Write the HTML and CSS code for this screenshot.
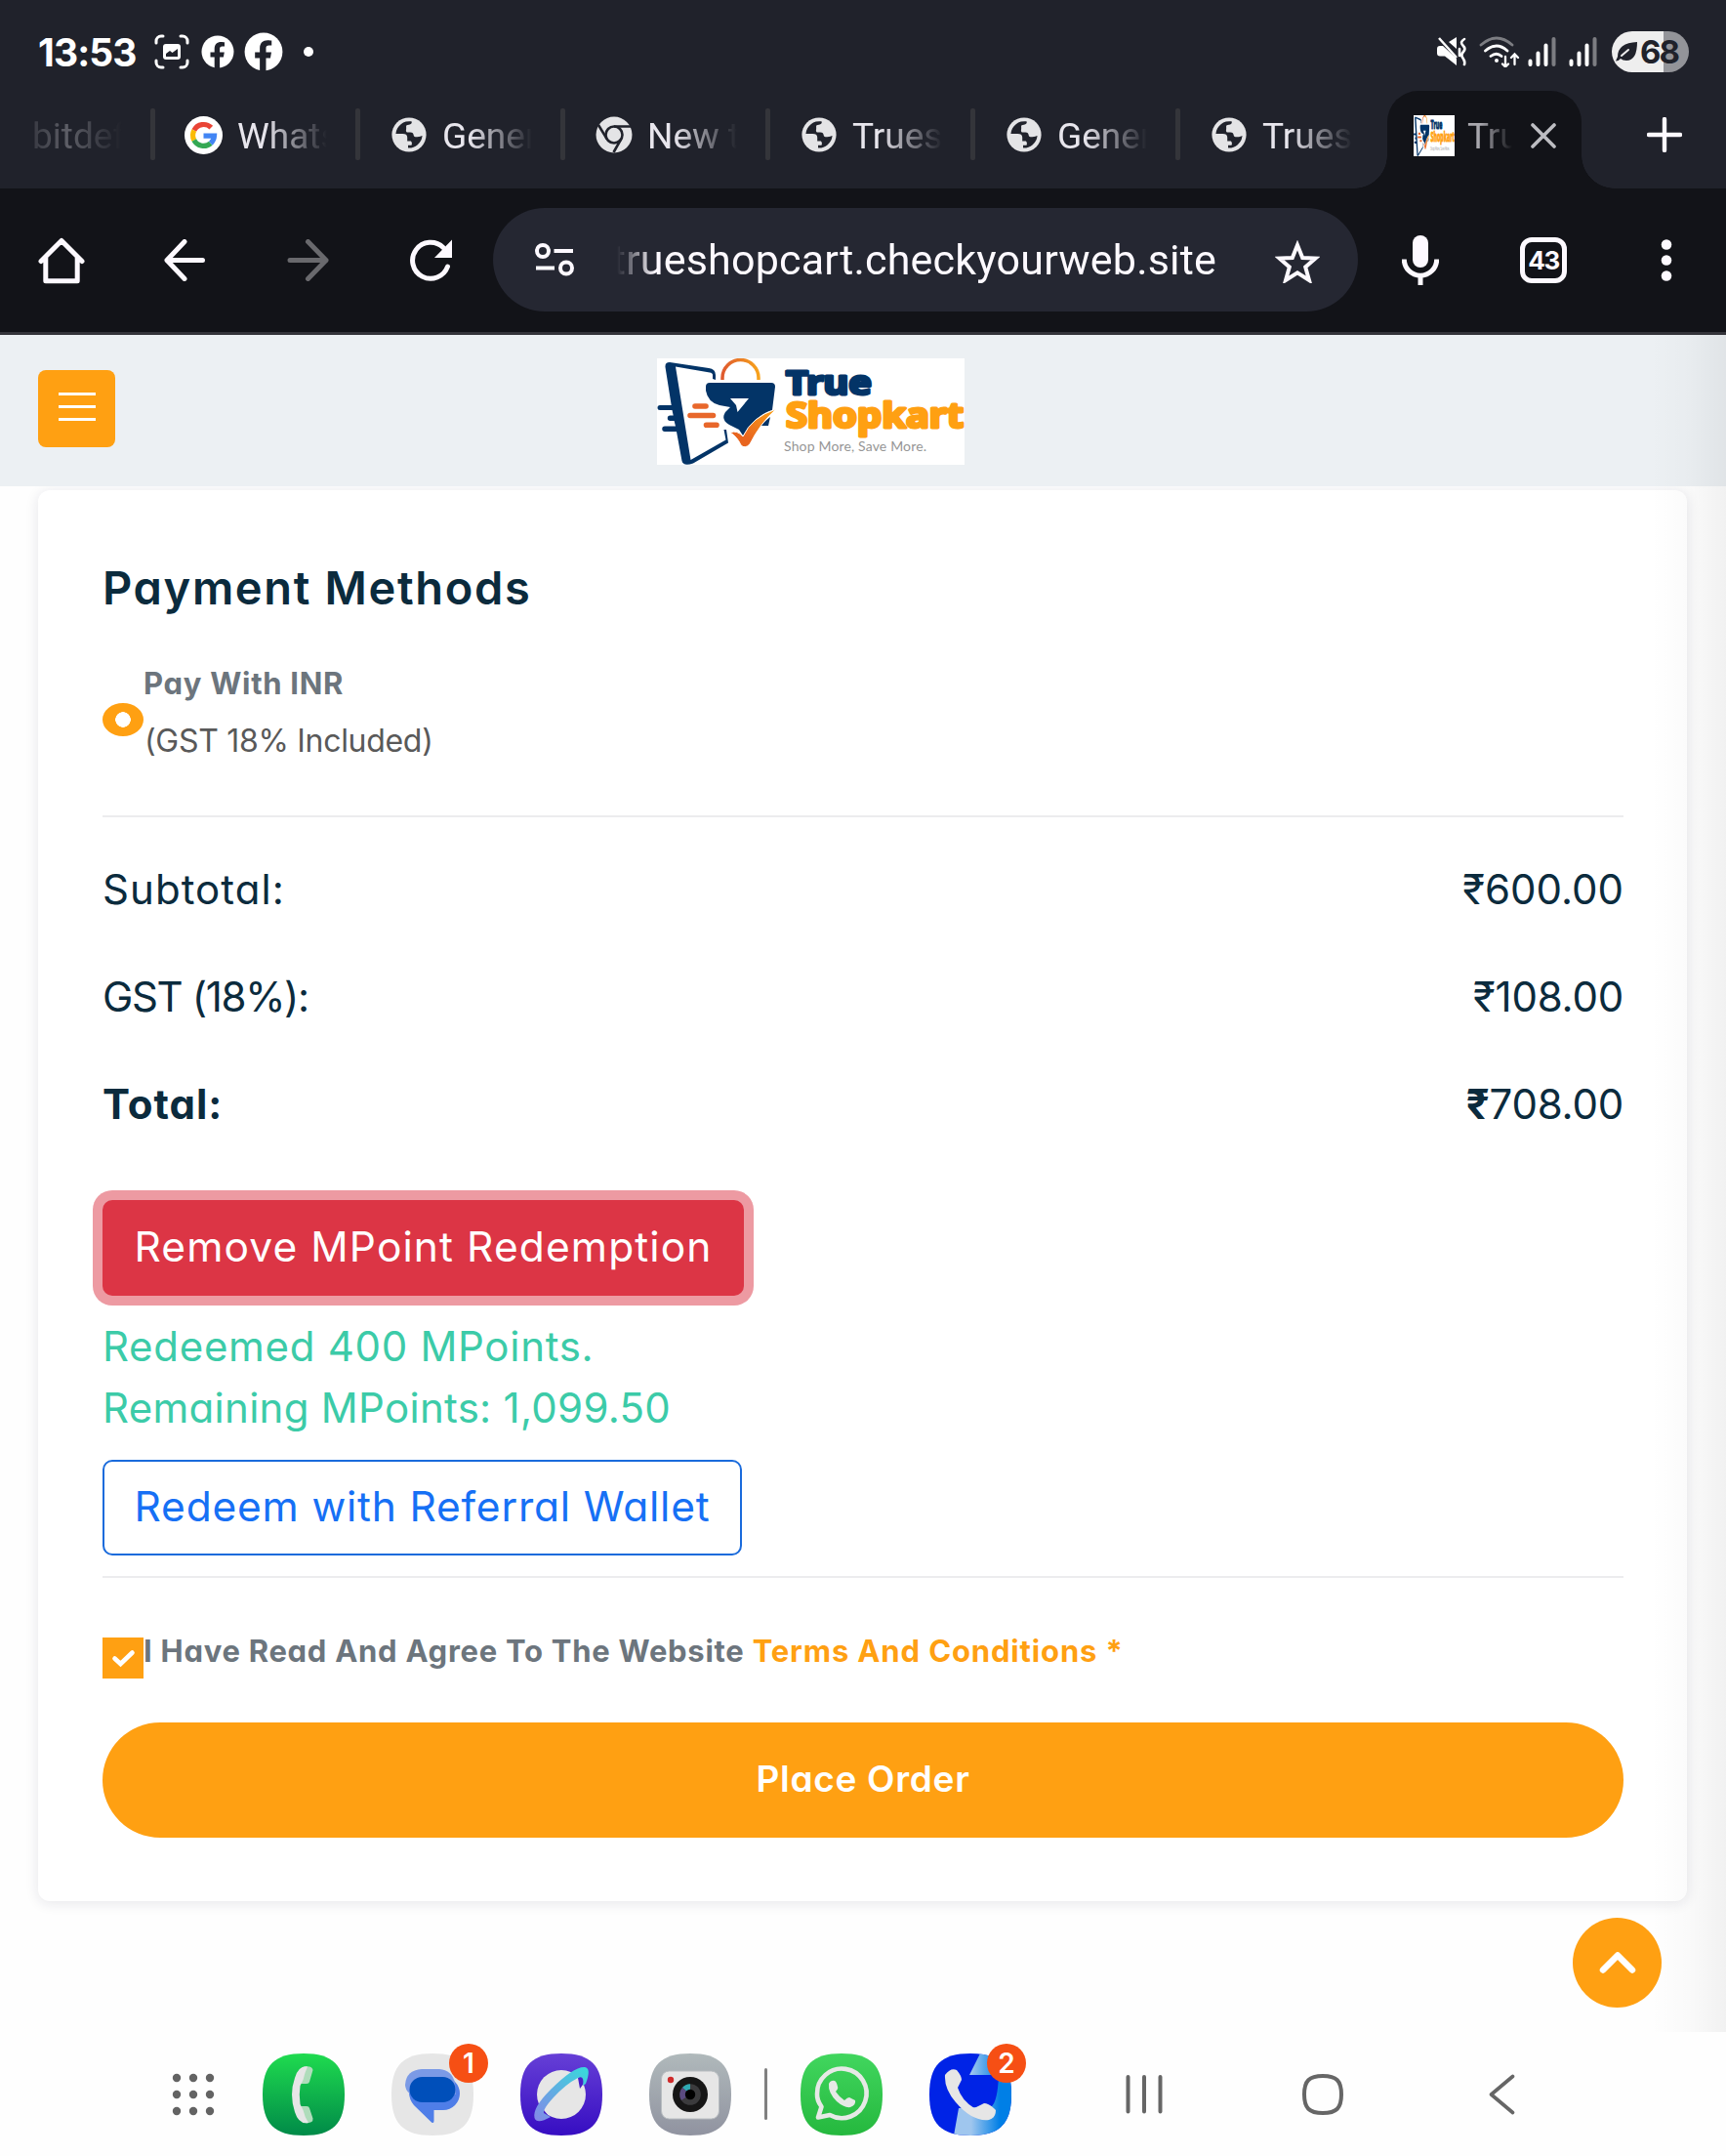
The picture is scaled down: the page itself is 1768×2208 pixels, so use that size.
FILE: index.html
```
<!DOCTYPE html>
<html lang="en">
<head>
<meta charset="utf-8">
<title>True Shopkart - Checkout</title>
<link rel="stylesheet" href="styles.css">
</head>
<body>
<svg class="defs" width="0" height="0" aria-hidden="true">
  <defs>
    <linearGradient id="gHandle" x1="0" x2="1" y1="0" y2="0"><stop offset="0" stop-color="#df5a2e"/><stop offset="1" stop-color="#f7a21c"/></linearGradient>
    <linearGradient id="gTick" x1="0" x2="1" y1="1" y2="0"><stop offset="0.3" stop-color="#e8651f"/><stop offset="1" stop-color="#fba31a"/></linearGradient>
    <linearGradient id="gPhone" x1="0" x2="0" y1="0" y2="1"><stop offset="0" stop-color="#1fdb4f"/><stop offset="1" stop-color="#008a48"/></linearGradient>
    <linearGradient id="gNet" x1="0" x2="0" y1="0" y2="1"><stop offset="0" stop-color="#663fd6"/><stop offset="1" stop-color="#360dc2"/></linearGradient>
    <linearGradient id="gRing" x1="0" x2="1" y1="1" y2="0"><stop offset="0" stop-color="#8587e8"/><stop offset="1" stop-color="#36dbdb"/></linearGradient>
    <linearGradient id="gCam" x1="0" x2="0" y1="0" y2="1"><stop offset="0" stop-color="#b0b9bb"/><stop offset="1" stop-color="#9093a0"/></linearGradient>
    <linearGradient id="gWa" x1="0" x2="0" y1="0" y2="1"><stop offset="0" stop-color="#41d65e"/><stop offset="1" stop-color="#25b83e"/></linearGradient>
    <linearGradient id="gCall" x1="0" x2="1" y1="0" y2="0"><stop offset="0.3" stop-color="#9fc6ee"/><stop offset="0.8" stop-color="#007fe6"/></linearGradient>
    <path id="squircle" d="M42 0C72 0 84 12 84 42S72 84 42 84 0 72 0 42 12 0 42 0Z"/>
    <clipPath id="clipSq"><use href="#squircle"/></clipPath>
    <symbol id="globe" viewBox="0 0 36 36">
      <circle cx="18" cy="18" r="17.6" fill="#e4e4e6"/>
      <path fill="#20222b" d="M4.400 17A14 14 0 0 1 20.500 4.300c.9 1.700-.3 3.300-2.700 3.400-2 .1-3 .6-2.700 2.600.2 1.500-.2 2.700-.2 3.500 0 1.300.8 1.800 2 1.800h2.400c2.300 0 3.200 1.100 3.400 2.900.4 1.700 1.800 1.900 3.600 1.800 2.600-.1 4.200-1 5.300-1.300A14 14 0 0 1 17 31.500V28.700h3.500c.8-1.700.4-3.300-.7-4.200h-3.600v-3.700c0-2.900-1.900-3.800-4.600-3.800z"/>
    </symbol>
    <symbol id="brand" viewBox="0 0 315 109">
      <rect width="315" height="109" fill="#fff"/>
      <path fill="#033467" fill-rule="evenodd" d="M13 4 53 10Q60 11 60 17V22L57 21V17Q57 15 54 14.500L19 8.500 34.500 104 70.500 83.500 68.500 73h2.500L73 86.500 37 107.500Q27 111 25.500 105L20 75H8a2.500 2.500 0 0 1 0-5.500H19L17.600 64H13.500a2.500 2.500 0 0 1 0-5.500h3.200L15.500 53H3a2.500 2.500 0 0 1 0-5H14.700L8.500 9Q8 4 13 4Z"/>
      <path fill="none" stroke="url(#gHandle)" stroke-width="3.500" d="M67 22V20a18.500 18.500 0 0 1 37 0v2"/>
      <path fill="#033467" d="M54 25h63q4 0 4 4L118 53Q103 57 92 75L88 79 84 73 74 68Q65 63 70 55L75 50 64 48Q52 45 50 33V29Q50 25 54 25ZM116 60 114 69H105Z"/>
      <path fill="#fff" d="M75 41H94L82.500 55 81 48Z"/>
      <g stroke="#e8672b" stroke-width="5.600" stroke-linecap="round"><path d="M39 49H50M34 58.500H57.500M50.500 68.200H61"/></g>
      <path fill="url(#gTick)" stroke="#fff" stroke-width="1" d="M75 76Q82 73 88 80 97 60 122 52 106 66 95 88 90 93 86 89 82 80 75 76Z"/>
      <g class="brand-name" stroke-linejoin="round">
        <text x="132" y="37" font-size="34" textLength="88" lengthAdjust="spacingAndGlyphs" fill="#033467" stroke="#033467">True</text>
        <text x="132" y="70.500" font-size="35" textLength="182" lengthAdjust="spacingAndGlyphs" fill="#ffa012" stroke="#ffa012">Shopkart</text>
      </g>
      <text class="brand-tag" x="130" y="94.500" font-size="14" textLength="146" fill="#969696">Shop More, Save More.</text>
    </symbol>
  </defs>
</svg>

<div class="status">
  <span class="clock">13:53</span>
  <svg class="st-shot" width="36" height="36" viewBox="0 0 36 36" fill="none" stroke="#fff" stroke-width="3" stroke-linecap="round"><path d="M2 9V7a5 5 0 0 1 5-5h2M27 2h2a5 5 0 0 1 5 5v2M34 27v2a5 5 0 0 1-5 5h-2M9 34H7a5 5 0 0 1-5-5v-2"/><rect x="9" y="10" width="18" height="16" rx="3" fill="#fff" stroke="none"/><path d="M12 23V20l4-3 2.500 2 5.500-4v8z" fill="#20222b" stroke="none"/></svg>
  <svg class="st-fb" width="34" height="34" viewBox="0 0 34 34"><circle cx="17" cy="17" r="16.500" fill="#fff"/><path fill="#20222b" d="M13.700 34V22.500H9.500V17.500h4.200V14c0-4.600 2.600-7 6.800-7 1.500 0 3.500.3 3.500.3v4.200h-2.300c-2 0-2.600 1-2.600 2.300v3.700h4.700l-.9 5h-3.800V34z"/></svg>
  <svg class="st-fb2" width="40" height="40" viewBox="0 0 34 34"><circle cx="17" cy="17" r="16.500" fill="#fff"/><path fill="#20222b" d="M13.700 34V22.500H9.500V17.500h4.200V14c0-4.600 2.600-7 6.800-7 1.500 0 3.500.3 3.500.3v4.200h-2.300c-2 0-2.600 1-2.600 2.300v3.700h4.700l-.9 5h-3.800V34z"/></svg>
  <i class="st-dot"></i>
  <div class="status-right">
    <svg width="30" height="30" viewBox="0 0 30 30"><path fill="#fff" d="M0 12q0-3 3-3h3L20 22V29L8 19.500H3q-3 0-3-3zM12 5l8-5V12z"/><path d="M2 1 20 21" stroke="#fff" stroke-width="2.500"/><path d="M28 2q-5 3-1.500 6.500T27 15t-.5 6.500T28 28M23 12v7" fill="none" stroke="#fff" stroke-width="2.600" stroke-linecap="round"/></svg>
    <svg class="st-wifi" width="42" height="32" viewBox="0 0 42 32" fill="none" stroke="#fff" stroke-width="2.800" stroke-linecap="round"><path d="M2 9Q18-5 34 9" stroke="#7c7d82"/><path d="M6.500 15Q18 5 29 15M12 20.500Q18 16 23 20.500"/><circle cx="18" cy="25" r="1" stroke-width="2"/><path d="M27 21V32M24 28.500l3 3 3-3M36.500 29V18.500M33 22l3.500-3.500L40 22" stroke-width="2.300"/></svg>
    <svg class="st-sig" width="30" height="30" viewBox="0 0 30 30" stroke="#fff" stroke-width="4" stroke-linecap="round"><path d="M2.500 24.500V28M10.500 16.500V28M18.500 8.500V28"/><path d="M26.500 2V28" stroke="#7c7d82"/></svg>
    <svg class="st-sig2" width="30" height="30" viewBox="0 0 30 30" stroke="#fff" stroke-width="4" stroke-linecap="round"><path d="M2.500 24.500V28M10.500 16.500V28M18.500 8.500V28"/><path d="M26.500 2V28" stroke="#7c7d82"/></svg>
    <div class="battery"><svg width="22" height="20" viewBox="0 0 22 20"><path fill="#20222b" d="M22 0Q22 19 11 19 7 19 5 17 3 19.500 0 19.500L2 15Q2 1 22 0Z"/><path d="M6 14 13 8" stroke="#eee" stroke-width="2" stroke-linecap="round"/></svg><span>68</span></div>
  </div>
</div>

<div class="tabs">
  <div class="tab tab-first"><span class="tab-label faded">bitdef</span></div>
  <div class="tab"><svg width="39" height="39" viewBox="0 0 39 39"><circle cx="19.500" cy="19.500" r="19.500" fill="#fff"/><g fill="none" stroke-width="5.200"><path stroke="#e94436" d="M9.800 14.500A11 11 0 0 1 27.300 11.700"/><path stroke="#fbbc05" d="M9.800 14.500a11 11 0 0 0 0 10"/><path stroke="#34a853" d="M9.800 24.500a11 11 0 0 0 17 3.200"/><path stroke="#4285f4" d="M26.800 27.700a11 11 0 0 0 3.700-7.600H19.500"/></g></svg><span class="tab-label">Whats</span></div>
  <div class="tab"><svg width="36" height="36"><use href="#globe"/></svg><span class="tab-label">Gener</span></div>
  <div class="tab"><svg width="38" height="38" viewBox="0 0 38 38"><circle cx="19" cy="19" r="18.500" fill="#e4e4e6"/><circle cx="19" cy="19" r="8.500" fill="none" stroke="#20222b" stroke-width="2.600"/><path fill="none" stroke="#20222b" stroke-width="2.600" d="M19 10.500H36M11.600 23.200 3 9M26.400 23.200 18.500 37"/></svg><span class="tab-label">New t</span></div>
  <div class="tab"><svg width="36" height="36"><use href="#globe"/></svg><span class="tab-label">Trues</span></div>
  <div class="tab"><svg width="36" height="36"><use href="#globe"/></svg><span class="tab-label">Gener</span></div>
  <div class="tab tab-last"><svg width="36" height="36"><use href="#globe"/></svg><span class="tab-label">Trues</span></div>
  <div class="tab-active"><svg class="favicon" width="42" height="42" viewBox="0 0 315 109" preserveAspectRatio="none"><use href="#brand" width="315" height="109"/></svg><span class="tab-label">Tru</span><svg class="tab-x" width="26" height="26" viewBox="0 0 26 26"><path d="M2 2 24 24M24 2 2 24" stroke="#bdbdc2" stroke-width="3.600" stroke-linecap="round"/></svg></div>
  <svg class="tab-plus" width="36" height="36" viewBox="0 0 36 36"><path d="M18 2V34M2 18H34" stroke="#fdf9ff" stroke-width="4.400" stroke-linecap="round"/></svg>
</div>

<div class="toolbar">
  <svg class="tb-home" width="48" height="48" viewBox="0 0 48 48" fill="none" stroke="#fdf9ff" stroke-width="5" stroke-linecap="round" stroke-linejoin="round"><path d="M3 24.500 24 3.500 45 24.500M7.800 21V44.700H40.200V21"/></svg>
  <svg class="tb-back" width="42" height="43" viewBox="0 0 42 43" fill="none" stroke="#fdf9ff" stroke-width="5" stroke-linecap="round" stroke-linejoin="round"><path d="M21 2.500 3 21.500 21 40.500M3 21.500H39.500"/></svg>
  <svg class="tb-fwd" width="43" height="43" viewBox="0 0 43 43" fill="none" stroke="#69696d" stroke-width="5" stroke-linecap="round" stroke-linejoin="round"><path d="M21.500 2.500 40 21.500 21.500 40.500M40 21.500H3"/></svg>
  <svg class="tb-reload" width="44" height="43" viewBox="0 0 44 43"><path d="M38.500 28A18.500 18.500 0 1 1 34 8.500" fill="none" stroke="#fdf9ff" stroke-width="5" stroke-linecap="round"/><path d="M43 .5V19H25z" fill="#fdf9ff"/></svg>
  <div class="omnibox">
    <svg class="ob-tune" width="40" height="34" viewBox="0 0 40 34" fill="none" stroke="#fdf9ff" stroke-width="4"><circle cx="8" cy="8" r="6"/><circle cx="32" cy="25.500" r="6"/><path d="M19.500 8H39M1 25.500H20"/></svg>
    <span class="url">trueshopcart.checkyourweb.site</span>
    <svg class="ob-star" width="46" height="44" viewBox="0 0 46 44"><path d="M23 5 28.200 18 41.500 18.600 31.200 27.500 35 41 23 33.400 11 41 14.800 27.500 4.500 18.600 17.800 18Z" fill="none" stroke="#fdf9ff" stroke-width="4"/></svg>
  </div>
  <svg class="tb-mic" width="38" height="52" viewBox="0 0 38 52"><rect x="11" y="0" width="16" height="33" rx="8" fill="#fdf9ff"/><path d="M2.300 24.500a16.700 16.700 0 0 0 33.400 0M19 41V51" fill="none" stroke="#fdf9ff" stroke-width="5"/></svg>
  <div class="tabcount">43</div>
  <svg class="tb-menu" width="12" height="43" viewBox="0 0 12 43" fill="#fdf9ff"><circle cx="6" cy="5.500" r="5.300"/><circle cx="6" cy="21.500" r="5.300"/><circle cx="6" cy="37.500" r="5.300"/></svg>
</div>

<div class="page">
  <header class="site-head">
    <button class="burger"><i></i><i></i><i></i></button>
    <svg class="logo" width="315" height="109"><use href="#brand"/></svg>
  </header>

  <main class="card">
    <h1>Payment Methods</h1>
    <div class="pay">
      <i class="radio"></i>
      <div class="pay-text"><strong>Pay With INR</strong><span>(GST 18% Included)</span></div>
    </div>
    <hr>
    <div class="sums">
      <div class="row"><span class="l1">Subtotal:</span><span>₹600.00</span></div>
      <div class="row"><span class="l2">GST (18%):</span><span class="tight">₹108.00</span></div>
      <div class="row"><b>Total:</b><span class="tight"><b>₹</b>708.00</span></div>
    </div>
    <button class="btn danger">Remove MPoint Redemption</button>
    <p class="note"><span class="n1">Redeemed 400 MPoints.</span><br><span class="n2">Remaining MPoints: 1,099.50</span></p>
    <button class="btn outline">Redeem with Referral Wallet</button>
    <hr>
    <div class="agree">
      <svg width="42" height="42" viewBox="0 0 42 42"><rect width="42" height="42" fill="#ffa012"/><path d="M12.500 21.500 18.500 27 30.500 15.500" fill="none" stroke="#fff" stroke-width="4.600" stroke-linecap="round"/></svg>
      <span>I Have Read And Agree To The Website <a>Terms And Conditions *</a></span>
    </div>
    <button class="place">Place Order</button>
  </main>
  <div class="fab"><svg width="38" height="24" viewBox="0 0 38 24"><path d="M4 19.500 19 4.500 34 19.500" fill="none" stroke="#fff" stroke-width="6.500" stroke-linecap="round" stroke-linejoin="round"/></svg></div>
</div>

<nav class="dock">
  <svg class="d-apps" width="44" height="44" viewBox="0 0 44 44" fill="#636363"><circle cx="5" cy="5" r="4.200"/><circle cx="22" cy="5" r="4.200"/><circle cx="39" cy="5" r="4.200"/><circle cx="5" cy="22" r="4.200"/><circle cx="22" cy="22" r="4.200"/><circle cx="39" cy="22" r="4.200"/><circle cx="5" cy="39" r="4.200"/><circle cx="22" cy="39" r="4.200"/><circle cx="39" cy="39" r="4.200"/></svg>
  <div class="app a1"><svg width="84" height="84" viewBox="0 0 84 84"><use href="#squircle" fill="url(#gPhone)"/><path fill="#afdcbb" d="M42 13.500Q51 12 51.500 17L48 29Q47.500 31 45 31H39ZM39 54h6q2.500 0 3 2L51.500 66.500Q52 72 43 71Z"/><path fill="#e6e6e6" d="M46 13.500Q43 20 41.500 27L38.500 33Q37 42 38.500 52L41.500 58Q43 65 47 71 37 73 33 60 27 42 33 25 37 12 46 13.500Z"/></svg></div>
  <div class="app a2"><svg width="84" height="84" viewBox="0 0 84 84"><use href="#squircle" fill="#e6e6e6"/><path fill="#4f7ee8" d="M35 24H53a17 17 0 0 1 0 34H43.500V69Q43.500 72 41 70.500L23 53Q18 47 18 40Z"/><path fill="#7b9ae6" d="M31 16H49Q62 17 65 30L66 42 18.500 41Q14 37 14 32 15 17 31 16Z"/><rect x="18.500" y="24" width="47" height="26" rx="13" fill="#004fba"/></svg><em class="badge">1</em></div>
  <div class="app a3"><svg width="84" height="84" viewBox="0 0 84 84"><use href="#squircle" fill="url(#gNet)"/><circle cx="42" cy="42" r="25" fill="#e6e6e6"/><path fill="#4a1ec8" d="M59 25Q66 21 66 26 66 30 61 36ZM22 60Q23 65 29 64L24 58Z"/><path fill="url(#gRing)" fill-rule="evenodd" d="M14.500 66Q12 56 31 37 55 13 66 14 73 15 67 31L64 33Q66 22 59 25 47 31 34 45 23 57 24 61L31 65Q17 73 14.500 66Z"/></svg></div>
  <div class="app a4"><svg width="84" height="84" viewBox="0 0 84 84"><use href="#squircle" fill="url(#gCam)"/><rect x="12.500" y="18" width="59" height="49" rx="8" fill="#e6e6e6" stroke="#b7bcc0"/><circle cx="22" cy="27" r="3.200" fill="#cf2a2a"/><circle cx="42" cy="42" r="18" fill="#161616"/><circle cx="42" cy="42" r="10.800" fill="#3b3b3d"/><path d="M42 42V31.200A10.800 10.800 0 0 0 34 35Z" fill="#2fa9b3"/><path d="M42 42 34 35A10.800 10.800 0 0 0 33 48Z" fill="#5a4a80"/><circle cx="42" cy="42" r="5.200" fill="#000"/></svg></div>
  <i class="d-line"></i>
  <div class="app a5"><svg width="84" height="84" viewBox="0 0 84 84"><use href="#squircle" fill="url(#gWa)"/><path d="M18 65.500 21.500 54.500Q16.700 48 17 41.500A25.300 25.300 0 1 1 30 63Z" fill="none" stroke="#e6e9e6" stroke-width="4.600" stroke-linejoin="round"/><path fill="#e6e9e6" d="M29 31q2-4 6-3 2 1 3 6 1 2-2 5 4 6 9 9 3-3 5-3l6 3q1 5-5 7-6 1-14-6-9-9-8-18z"/></svg></div>
  <div class="app a6"><svg width="84" height="84" viewBox="0 0 84 84"><g clip-path="url(#clipSq)"><rect width="84" height="84" fill="#0023e6"/><path fill="url(#gCall)" d="M52 0H84V84H25L30 56 64 54Q70 48 71 22H41Z"/></g><path fill="#e6e6e6" d="M16 22Q22 14 28 17 33 23 33 27L29 35Q33 48 46 56L56 51Q61 51 68 58 68 66 61 68 44 70 27 50 15 36 16 22Z"/></svg><em class="badge b2">2</em></div>
  <svg class="d-rec" width="38" height="42" viewBox="0 0 38 42" stroke="#666" stroke-width="4" stroke-linecap="round"><path d="M2.500 3V38.500M19 3V38.500M35.500 3V38.500"/></svg>
  <svg class="d-home" width="42" height="42" viewBox="0 0 42 42"><path d="M21 2C35 2 40 7 40 21S35 40 21 40 2 35 2 21 7 2 21 2Z" fill="none" stroke="#666" stroke-width="4"/></svg>
  <svg class="d-back" width="27" height="42" viewBox="0 0 27 42"><path d="M24.500 2.500 2.500 21 24.500 39.500" fill="none" stroke="#666" stroke-width="3.600" stroke-linecap="round" stroke-linejoin="round"/></svg>
</nav>
</body>
</html>
```
FILE: styles.css
```
* { box-sizing: border-box; margin: 0; padding: 0; }
html, body { width: 1768px; height: 2208px; overflow: hidden; background: #fefefe; }
body { font-family: Inter, "Open Sans", sans-serif; font-feature-settings: "cv11"; display: flex; flex-direction: column; }
svg { display: block; flex: none; }
.defs { position: absolute; }
i, em { font-style: normal; }
button { font: inherit; font-feature-settings: inherit; border: 0; display: block; }

/* status bar */
.status { height: 93px; background: #20222b; display: flex; align-items: center; padding: 13px 38px 0 39px; flex: none; color: #fff; }
.clock { font-weight: 700; font-size: 39px; letter-spacing: -0.9px; width: 119px; }
.st-fb { margin-left: 12px; }
.st-fb2 { margin-left: 10px; }
.st-dot { width: 10px; height: 10px; border-radius: 50%; background: #fff; margin-left: 21px; }
.status-right { margin-left: auto; display: flex; align-items: center; }
.st-wifi { margin-left: 13px; }
.st-sig { margin-left: 8px; }
.st-sig2 { margin-left: 12px; }
.battery { margin-left: 14px; width: 79px; height: 42px; border-radius: 21px; background: linear-gradient(90deg, #eee 53px, #939499 53px); display: flex; align-items: center; padding-left: 4px; color: #20222b; font-weight: 700; font-size: 33px; letter-spacing: -2px; }
.battery span { margin-left: 3px; }

/* tab strip */
.tabs { height: 100px; background: #20222b; display: flex; flex: none; }
.tab { width: 210px; height: 90px; display: flex; align-items: center; padding-left: 30px; position: relative; }
.tab::after { content: ""; position: absolute; right: 0; top: 18px; width: 5px; height: 53px; background: #34353a; border-radius: 2px; }
.tab svg { margin-right: 15px; margin-left: 2px; }
.tab svg[width="36"] { margin-right: 16px; }
.tab svg[width="39"] { margin-left: 0; }
.tab svg[width="38"] { margin-left: 1px; }
.tab-label { font-family: Roboto, sans-serif; font-size: 37px; padding-top: 2px; color: #e8e6ed; width: 92px; overflow: hidden; white-space: nowrap; -webkit-mask-image: linear-gradient(90deg, #000 30%, transparent 100%); mask-image: linear-gradient(90deg, #000 30%, transparent 100%); }
.tab-first { width: 159px; padding-left: 33px; }
.tab-first .faded { color: #5e5f67; -webkit-mask-image: linear-gradient(90deg, rgba(0,0,0,.4), #000 40%, transparent 100%); mask-image: linear-gradient(90deg, rgba(0,0,0,.4), #000 40%, transparent 100%); }
.tab-last { width: 212px; }
.tab-last::after { display: none; }
.tab-active { width: 199px; height: 100px; background: #121318; border-radius: 32px 32px 0 0; position: relative; display: flex; align-items: center; padding: 0 0 9px 27px; }
.tab-active::before, .tab-active::after { content: ""; position: absolute; bottom: 0; width: 34px; height: 34px; }
.tab-active::before { right: 100%; background: radial-gradient(circle at 0 0, transparent 33.500px, #121318 34px); }
.tab-active::after { left: 100%; background: radial-gradient(circle at 100% 0, transparent 33.500px, #121318 34px); }
.tab-active .tab-label { width: 46px; margin-left: 13px; color: #a8a7ad; }
.tab-x { margin-left: 19px; }
.tab-plus { margin: 27px 0 0 67px; }

/* browser toolbar */
.toolbar { height: 150px; background: #121318; border-bottom: 3px solid #34343a; display: flex; align-items: center; padding-left: 39px; flex: none; }
.tb-back { margin-left: 81px; }
.tb-fwd { margin-left: 84px; }
.tb-reload { margin-left: 83px; }
.omnibox { margin-left: 41px; width: 886px; height: 106px; border-radius: 53px; background: #252732; display: flex; align-items: center; padding-left: 43px; margin-top: -1px; }
.url { margin-left: 44px; width: 614px; height: 60px; line-height: 60px; font-family: Roboto, sans-serif; font-size: 43px; letter-spacing: .2px; color: #fdf9ff; white-space: nowrap; display: flex; justify-content: flex-end; overflow: hidden; -webkit-mask-image: linear-gradient(90deg, transparent, #000 40px); mask-image: linear-gradient(90deg, transparent, #000 40px); }
.ob-star { margin-left: 60px; margin-top: 4px; }
.tb-mic { margin-left: 45px; }
.tabcount { margin-left: 83px; width: 48px; height: 47px; border: 5px solid #fdf9ff; border-radius: 12px; color: #fdf9ff; font-weight: 700; font-size: 26px; letter-spacing: -1.5px; line-height: 38px; text-align: center; }
.tb-menu { margin-left: 96px; }

/* page */
.page { height: 1738px; flex: none; background: #fefefe; position: relative; }
.page::after { content: ""; position: absolute; inset: 0 0 0 auto; width: 78px; background: linear-gradient(90deg, rgba(0,0,0,0), rgba(0,0,0,.015) 50%, rgba(0,0,0,.05)); pointer-events: none; }
.site-head { height: 155px; background: #ecf0f3; display: flex; padding: 0 0 0 39px; }
.burger { width: 79px; height: 79px; margin-top: 36px; border-radius: 8px; background: #ffa012; display: flex; flex-direction: column; gap: 10px; padding: 23px 20px 0 21px; }
.burger i { height: 3px; background: #fff; }
.logo { margin: 24px 0 0 555px; }
.brand-name { font-family: "Noto Sans", sans-serif; font-weight: 700; stroke-width: 3px; }
.brand-tag { font-family: Lato, sans-serif; }

.card { width: 1689px; height: 1445px; margin: 4px 0 0 39px; border-radius: 12px; background: #fff; box-shadow: 0 2px 14px rgba(30,30,60,.11); padding: 70px 65px 0 66px; color: #0b2b3d; font-size: 42px; clip-path: inset(-4px -20px -20px -20px); }
h1 { font-size: 47px; font-weight: 600; line-height: 60px; letter-spacing: 1.650px; }
.pay { display: flex; margin-top: 38px; height: 118px; }
.radio { width: 42px; height: 34px; margin-top: 50px; border-radius: 50%; background: radial-gradient(8px 8px at 50% 50%, #fff 94%, #ffa012); }
.pay-text { display: flex; flex-direction: column; font-size: 31px; line-height: 59px; }
.pay-text strong { color: #6c757d; letter-spacing: .7px; }
.pay-text span { color: #595959; font-size: 32px; letter-spacing: -.3px; margin-left: 1px; }
hr { border: 0; height: 2px; background: #ececee; margin-top: 47px; }
.sums { display: flex; flex-direction: column; gap: 47px; margin-top: 42px; }
.row { display: flex; justify-content: space-between; line-height: 63px; }
.l1 { letter-spacing: 1.050px; }
.l2 { letter-spacing: -1.350px; }
.row b { letter-spacing: 1px; font-weight: 700; }
.tight { letter-spacing: -.2px; }
.tight b { letter-spacing: -.2px; }
.btn { height: 98px; border-radius: 10px; text-align: center; white-space: nowrap; padding-bottom: 3px; }
.danger { width: 657px; margin-top: 67px; background: #dc3545; color: #fff; font-size: 42.500px; letter-spacing: 1.1px; box-shadow: 0 0 0 10px #ed9aa2; }
.note { margin-top: 20px; color: #3ccba8; line-height: 63px; white-space: nowrap; }
.n1 { letter-spacing: .7px; }
.n2 { letter-spacing: .29px; }
.outline { width: 655px; margin-top: 22px; background: transparent; border: 2px solid #1a6bdc; color: #1670f5; font-size: 42.500px; letter-spacing: .8px; }
.outline + hr { margin-top: 21px; }
.agree { display: flex; margin-top: 52px; height: 51px; font-size: 31px; font-weight: 700; line-height: 46px; letter-spacing: .73px; color: #6c757d; white-space: nowrap; }
.agree svg { margin-top: 9px; }
.agree a { color: #ffa012; letter-spacing: .86px; }
.place { width: 1558px; height: 118px; margin-top: 45px; border-radius: 59px; background: #ffa012; color: #fff; font-size: 37px; font-weight: 600; letter-spacing: .7px; padding-bottom: 3px; }
.fab { position: absolute; right: 66px; bottom: 25px; width: 91px; height: 92px; border-radius: 50%; background: #ffa012; display: flex; align-items: center; justify-content: center; z-index: 2; }

/* dock */
.dock { height: 127px; flex: none; display: flex; align-items: center; padding-left: 176px; }
.app { position: relative; }
.a1 { margin-left: 49px; }
.a2 { margin-left: 48px; }
.a3 { margin-left: 48px; }
.a4 { margin-left: 48px; }
.d-line { width: 3px; height: 53px; border-radius: 2px; background: #808080; margin-left: 34px; }
.a5 { margin-left: 34px; }
.a6 { margin-left: 48px; }
.badge { position: absolute; left: 59px; top: -10px; width: 40px; height: 40px; border-radius: 50%; background: #f64f14; color: #fff; font-size: 28px; font-weight: 600; line-height: 40px; text-align: center; }
.d-rec { margin-left: 117px; }
.d-home { margin-left: 143px; }
.d-back { margin-left: 149px; }
```
